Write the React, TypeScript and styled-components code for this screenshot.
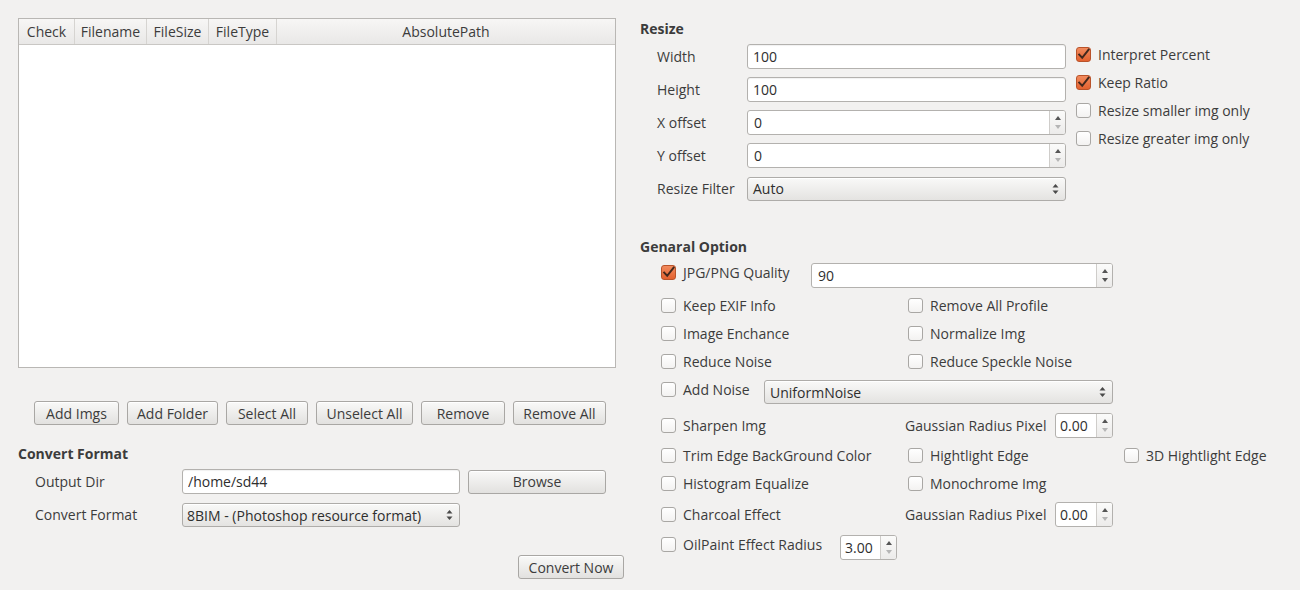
import React from 'react';
import styled, { createGlobalStyle } from 'styled-components';

const Global = createGlobalStyle`
  html, body { margin: 0; padding: 0; background: #f2f1f0; }
  body { font-family: "Open Sans", "Noto Sans", sans-serif; font-size: 14px; color: #3c3c3c; }
  * { box-sizing: border-box; }
`;

const Window = styled.div`
  width: 1300px;
  height: 590px;
  display: flex;
  overflow: hidden;
  background: #f2f1f0;
`;

const LeftPane = styled.div`
  width: 606px;
  margin-left: 18px;
  padding-top: 18px;
  display: flex;
  flex-direction: column;
`;

const RightPane = styled.div`
  width: 660px;
  margin-left: 16px;
  padding-top: 20px;
  display: flex;
  flex-direction: column;
`;

const Table = styled.div`
  width: 598px;
  height: 350px;
  background: #fff;
  border: 1px solid #b9b7b4;
  display: flex;
  flex-direction: column;
`;

const HeaderRow = styled.div`
  display: flex;
  height: 26px;
  border-bottom: 1px solid #c9c7c4;
  background: linear-gradient(#f7f6f5, #e9e8e7);
`;

const HeaderCell = styled.div<{ $w?: number }>`
  ${(p) => (p.$w ? `width:${p.$w}px; flex: none;` : 'flex: 1;')}
  display: flex;
  align-items: center;
  justify-content: center;
  border-right: 1px solid #d6d4d1;
  white-space: nowrap;
  &:last-child { border-right: none; }
`;

const ButtonRow = styled.div`
  display: flex;
  gap: 8px;
  margin-top: 33px;
  padding-left: 16px;
`;

const Button = styled.button<{ $w: number }>`
  width: ${(p) => p.$w}px;
  height: 24px;
  padding: 0;
  font: inherit;
  color: #3c3c3c;
  border: 1px solid #a9a7a4;
  border-radius: 3px;
  background: linear-gradient(#f9f9f8, #e2e1df);
  box-shadow: inset 0 1px 0 #ffffff;
  white-space: nowrap;
`;

const RightButton = styled(Button)`
  align-self: flex-end;
  margin-top: 28px;
`;

const SectionTitle = styled.div<{ $mt: number }>`
  font-weight: 700;
  line-height: 18px;
  height: 18px;
  margin-top: ${(p) => p.$mt}px;
`;

const FormRow = styled.div<{ $mt: number }>`
  display: grid;
  grid-template-columns: 139px 278px 138px;
  column-gap: 8px;
  align-items: center;
  padding-left: 17px;
  margin-top: ${(p) => p.$mt}px;
`;

const Label = styled.span`
  white-space: nowrap;
  line-height: 18px;
`;

const TextInput = styled.input`
  height: 25px;
  width: 100%;
  border: 1px solid #b3b1ae;
  border-radius: 3px;
  background: #fff;
  box-shadow: inset 0 1px 1px rgba(0, 0, 0, 0.06);
  font: inherit;
  color: #2e2e2e;
  padding: 0 5px;
  outline: none;
`;

const SpinWrap = styled.div<{ $pad: number }>`
  display: flex;
  height: 25px;
  width: 100%;
  border: 1px solid #b3b1ae;
  border-radius: 3px;
  background: #fff;
  overflow: hidden;
  padding-left: ${(p) => p.$pad}px;
  align-items: center;
  color: #2e2e2e;
`;

const SpinValue = styled.span`
  flex: 1;
`;

const SpinButtons = styled.div`
  width: 16px;
  height: 100%;
  border-left: 1px solid #cfcdca;
  background: linear-gradient(#fbfbfa, #ecebea);
  display: flex;
  flex-direction: column;
  align-items: center;
  justify-content: center;
  gap: 5px;
`;

const Combo = styled.div<{ $pad: number }>`
  height: 24px;
  width: 100%;
  border: 1px solid #aeaca9;
  border-radius: 3px;
  background: linear-gradient(#f9f9f8, #e4e3e1);
  box-shadow: inset 0 1px 0 #fff;
  display: flex;
  align-items: center;
  padding-left: ${(p) => p.$pad}px;
  padding-right: 6px;
  color: #2e2e2e;
  white-space: nowrap;
`;

const ComboText = styled.span`
  flex: 1;
`;

const ResizeBlock = styled.div`
  display: flex;
  margin-top: 6px;
`;

const ResizeGrid = styled.div`
  display: grid;
  grid-template-columns: 90px 319px;
  grid-auto-rows: 25px;
  row-gap: 8px;
  align-items: center;
  padding-left: 17px;
`;

const CheckColumn = styled.div`
  display: flex;
  flex-direction: column;
  gap: 10px;
  margin-left: 10px;
  margin-top: 1px;
`;

const CheckLabel = styled.label`
  display: flex;
  align-items: center;
  gap: 7px;
  height: 18px;
  white-space: nowrap;
`;

const Box = styled.span<{ $on?: boolean }>`
  width: 15px;
  height: 15px;
  flex: none;
  border-radius: 3px;
  border: 1px solid ${(p) => (p.$on ? '#b9532a' : '#a9a7a4')};
  background: ${(p) => (p.$on ? 'linear-gradient(#f28b5e, #e3612f)' : 'linear-gradient(#ffffff, #f3f2f1)')};
  display: flex;
  align-items: center;
  justify-content: center;
  overflow: visible;
`;

const Options = styled.div`
  padding-left: 21px;
  display: flex;
  flex-direction: column;
`;

const OptRow = styled.div<{ $cols: string; $mt: number; $h: number; $top?: boolean }>`
  display: grid;
  grid-template-columns: ${(p) => p.$cols};
  height: ${(p) => p.$h}px;
  margin-top: ${(p) => p.$mt}px;
  align-items: ${(p) => (p.$top ? 'start' : 'center')};
`;

const Arrow = ({ up, color }: { up: boolean; color: string }) => (
  <svg width="6" height="4" viewBox="0 0 6 4">
    <path d={up ? 'M0 4 L3 0 L6 4 Z' : 'M0 0 L6 0 L3 4 Z'} fill={color} />
  </svg>
);

const ComboArrows = () => (
  <svg width="7" height="12" viewBox="0 0 7 12">
    <path d="M0.5 4.5 L3.5 1 L6.5 4.5 Z" fill="#4a4a4a" />
    <path d="M0.5 7.5 L6.5 7.5 L3.5 11 Z" fill="#4a4a4a" />
  </svg>
);

const Check = ({ label, on }: { label: string; on?: boolean }) => (
  <CheckLabel>
    <Box $on={on}>
      {on && (
        <svg width="13" height="13" viewBox="0 0 13 13" style={{ overflow: 'visible' }}>
          <path d="M2.2 6.6 L5.2 9.8 L11.6 1.6" stroke="#42281d" strokeWidth="2" fill="none" strokeLinecap="square" />
        </svg>
      )}
    </Box>
    <span>{label}</span>
  </CheckLabel>
);

const Spin = ({ value, pad = 6, downDim = true }: { value: string; pad?: number; downDim?: boolean }) => (
  <SpinWrap $pad={pad}>
    <SpinValue>{value}</SpinValue>
    <SpinButtons>
      <Arrow up color="#555" />
      <Arrow up={false} color={downDim ? '#b5b5b5' : '#555'} />
    </SpinButtons>
  </SpinWrap>
);

const Select = ({ value, pad = 5 }: { value: string; pad?: number }) => (
  <Combo $pad={pad}>
    <ComboText>{value}</ComboText>
    <ComboArrows />
  </Combo>
);

export default function App() {
  return (
    <>
      <Global />
      <Window>
        <LeftPane>
          <Table>
            <HeaderRow>
              <HeaderCell $w={56}>Check</HeaderCell>
              <HeaderCell $w={72}>Filename</HeaderCell>
              <HeaderCell $w={62}>FileSize</HeaderCell>
              <HeaderCell $w={68}>FileType</HeaderCell>
              <HeaderCell>AbsolutePath</HeaderCell>
            </HeaderRow>
          </Table>
          <ButtonRow>
            <Button $w={85}>Add Imgs</Button>
            <Button $w={91}>Add Folder</Button>
            <Button $w={82}>Select All</Button>
            <Button $w={97}>Unselect All</Button>
            <Button $w={84}>Remove</Button>
            <Button $w={93}>Remove All</Button>
          </ButtonRow>
          <SectionTitle $mt={20}>Convert Format</SectionTitle>
          <FormRow $mt={6}>
            <Label>Output Dir</Label>
            <TextInput readOnly value="/home/sd44" />
            <Button $w={138}>Browse</Button>
          </FormRow>
          <FormRow $mt={9}>
            <Label>Convert Format</Label>
            <Select value="8BIM - (Photoshop resource format)" pad={4} />
          </FormRow>
          <RightButton $w={106}>Convert Now</RightButton>
        </LeftPane>

        <RightPane>
          <SectionTitle $mt={0}>Resize</SectionTitle>
          <ResizeBlock>
            <ResizeGrid>
              <Label>Width</Label>
              <TextInput readOnly value="100" />
              <Label>Height</Label>
              <TextInput readOnly value="100" />
              <Label>X offset</Label>
              <Spin value="0" />
              <Label>Y offset</Label>
              <Spin value="0" />
              <Label>Resize Filter</Label>
              <Select value="Auto" />
            </ResizeGrid>
            <CheckColumn>
              <Check label="Interpret Percent" on />
              <Check label="Keep Ratio" on />
              <Check label="Resize smaller img only" />
              <Check label="Resize greater img only" />
            </CheckColumn>
          </ResizeBlock>

          <SectionTitle $mt={37}>Genaral Option</SectionTitle>
          <Options>
            <OptRow $cols="150px 302px" $mt={7} $h={25} $top>
              <Check label="JPG/PNG Quality" on />
              <Spin value="90" downDim={false} />
            </OptRow>
            <OptRow $cols="247px 216px" $mt={8} $h={18}>
              <Check label="Keep EXIF Info" />
              <Check label="Remove All Profile" />
            </OptRow>
            <OptRow $cols="247px 216px" $mt={10} $h={18}>
              <Check label="Image Enchance" />
              <Check label="Normalize Img" />
            </OptRow>
            <OptRow $cols="247px 216px" $mt={10} $h={18}>
              <Check label="Reduce Noise" />
              <Check label="Reduce Speckle Noise" />
            </OptRow>
            <OptRow $cols="103px 349px" $mt={10} $h={24} $top>
              <Check label="Add Noise" />
              <Select value="UniformNoise" />
            </OptRow>
            <OptRow $cols="244px 150px 58px" $mt={9} $h={24}>
              <Check label="Sharpen Img" />
              <Label>Gaussian Radius Pixel</Label>
              <Spin value="0.00" pad={4} />
            </OptRow>
            <OptRow $cols="247px 216px auto" $mt={9} $h={18}>
              <Check label="Trim Edge BackGround Color" />
              <Check label="Hightlight Edge" />
              <Check label="3D Hightlight Edge" />
            </OptRow>
            <OptRow $cols="247px 216px" $mt={10} $h={18}>
              <Check label="Histogram Equalize" />
              <Check label="Monochrome Img" />
            </OptRow>
            <OptRow $cols="244px 150px 58px" $mt={10} $h={24}>
              <Check label="Charcoal Effect" />
              <Label>Gaussian Radius Pixel</Label>
              <Spin value="0.00" pad={4} />
            </OptRow>
            <OptRow $cols="179px 57px" $mt={9} $h={24} $top>
              <Check label="OilPaint Effect Radius" />
              <Spin value="3.00" pad={4} />
            </OptRow>
          </Options>
        </RightPane>
      </Window>
    </>
  );
}
